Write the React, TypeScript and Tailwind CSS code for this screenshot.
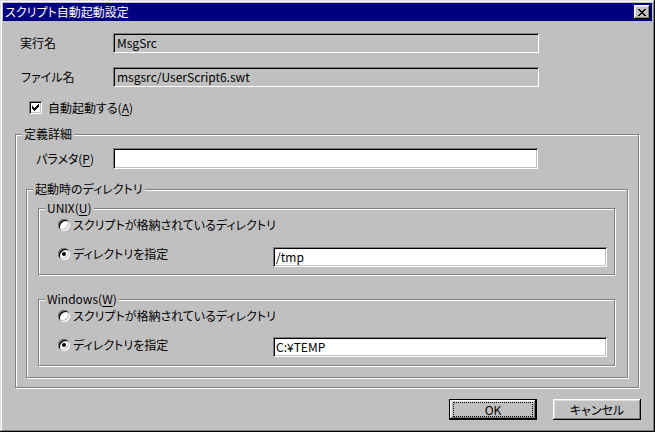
import type { ReactNode } from "react";

const sunken =
  "shadow-[inset_1px_1px_#808080,inset_-1px_-1px_#fff,inset_2px_2px_#000,inset_-2px_-2px_#c0c0c0]";
const raised =
  "shadow-[inset_-1px_-1px_#000,inset_1px_1px_#fff,inset_-2px_-2px_#808080,inset_2px_2px_#dfdfdf]";

function Group({
  title,
  className,
  children,
}: {
  title: ReactNode;
  className: string;
  children?: ReactNode;
}) {
  return (
    <div
      className={`relative shrink-0 border border-[#808080] shadow-[1px_1px_0_#fff,inset_1px_1px_0_#fff] ${className}`}
    >
      <span className="absolute left-[6px] top-[-1px] -translate-y-1/2 bg-[#c0c0c0] px-[2px] leading-[14px] whitespace-nowrap">
        {title}
      </span>
      {children}
    </div>
  );
}

function Radio({ checked }: { checked?: boolean }) {
  return (
    <div
      className={`relative h-[12px] w-[12px] shrink-0 rounded-full bg-white ${sunken}`}
    >
      {checked && (
        <div className="absolute left-[4px] top-[4px] h-[4px] w-[4px] rounded-full bg-black" />
      )}
    </div>
  );
}

function Field({ value, className }: { value: string; className: string }) {
  return (
    <div
      className={`flex shrink-0 items-center whitespace-nowrap leading-[14px] ${sunken} ${className}`}
    >
      {value}
    </div>
  );
}

function U({ children }: { children: string }) {
  return <span className="underline underline-offset-2">{children}</span>;
}

// check mark pixels inside the 13x13 box
const checkPx = [
  [9, 3], [8, 4], [9, 4], [3, 5], [7, 5], [8, 5], [9, 5],
  [3, 6], [4, 6], [6, 6], [7, 6], [8, 6], [3, 7], [4, 7], [5, 7], [6, 7], [7, 7],
  [4, 8], [5, 8], [6, 8], [5, 9],
];

// close button "x" pixels
const closePx = [
  [0, 0], [1, 0], [6, 0], [7, 0],
  [1, 1], [2, 1], [5, 1], [6, 1],
  [2, 2], [3, 2], [4, 2], [5, 2],
  [3, 3], [4, 3],
  [2, 4], [3, 4], [4, 4], [5, 4],
  [1, 5], [2, 5], [5, 5], [6, 5],
  [0, 6], [1, 6], [6, 6], [7, 6],
];

function DirGroup({
  title,
  path,
  rowGap,
  radioOffset,
  top,
}: {
  title: ReactNode;
  path: string;
  rowGap: string;
  radioOffset: string;
  top: string;
}) {
  return (
    <Group title={title} className={`ml-[11px] h-[67px] w-[577px] ${top}`}>
      <div className="flex flex-col">
        <div className="ml-[19px] mt-[10px] flex h-[12px] items-center gap-[3px] leading-[12px]">
          <Radio />
          <span>スクリプトが格納されているディレクトリ</span>
        </div>
        <div className={`ml-[19px] flex items-start ${rowGap}`}>
          <div
            className={`flex h-[12px] w-[215px] shrink-0 items-center gap-[3px] leading-[12px] ${radioOffset}`}
          >
            <Radio checked />
            <span>ディレクトリを指定</span>
          </div>
          <Field value={path} className="h-[20px] w-[334px] bg-white pl-[3px]" />
        </div>
      </div>
    </Group>
  );
}

export default function App() {
  return (
    <div className="h-[432px] w-[655px] bg-[#c0c0c0] p-[3px] text-[12px] text-black font-['Noto_Sans_CJK_JP',sans-serif] [font-feature-settings:'palt'] shadow-[inset_-1px_-1px_#000,inset_1px_1px_#dfdfdf,inset_-2px_-2px_#808080,inset_2px_2px_#fff]">
      <div className="flex h-[18px] items-center justify-between bg-[#000080] pl-[2px] pr-[2px] text-white">
        <span className="leading-[14px]">スクリプト自動起動設定</span>
        <button
          className={`flex h-[14px] w-[16px] items-center justify-center bg-[#c0c0c0] ${raised}`}
        >
          <svg width="8" height="7" viewBox="0 0 8 7" shapeRendering="crispEdges">
            {closePx.map(([x, y]) => (
              <rect key={`${x}-${y}`} x={x} y={y} width="1" height="1" fill="#000" />
            ))}
          </svg>
        </button>
      </div>

      <div className="flex flex-col">
        <div className="mt-[12px] flex h-[20px] items-center">
          <span className="ml-[17px] w-[93px] shrink-0">実行名</span>
          <Field value="MsgSrc" className="h-[20px] w-[426px] pl-[4px]" />
        </div>
        <div className="mt-[14px] flex h-[20px] items-center">
          <span className="ml-[18px] w-[92px] shrink-0">ファイル名</span>
          <Field value="msgsrc/UserScript6.swt" className="h-[20px] w-[426px] pl-[4px]" />
        </div>
        <div className="ml-[26px] mt-[14px] flex h-[13px] items-center gap-[6px] leading-[13px]">
          <div className={`relative h-[13px] w-[13px] shrink-0 bg-white ${sunken}`}>
            <svg
              className="absolute left-0 top-0"
              width="13"
              height="13"
              viewBox="0 0 13 13"
              shapeRendering="crispEdges"
            >
              {checkPx.map(([x, y]) => (
                <rect key={`${x}-${y}`} x={x} y={y} width="1" height="1" fill="#000" />
              ))}
            </svg>
          </div>
          <span>
            自動起動する(<U>A</U>)
          </span>
        </div>

        <Group title="定義詳細" className="ml-[12px] mt-[20px] h-[254px] w-[624px]">
          <div className="flex flex-col">
            <div className="mt-[13px] flex h-[21px] items-center">
              <span className="ml-[20px] w-[77px] shrink-0">
                パラメタ(<U>P</U>)
              </span>
              <Field value="" className="h-[21px] w-[425px] bg-white" />
            </div>
            <Group
              title="起動時のディレクトリ"
              className="ml-[10px] mt-[20px] h-[189px] w-[602px]"
            >
              <div className="flex flex-col">
                <DirGroup
                  title={
                    <>
                      UNIX(<U>U</U>)
                    </>
                  }
                  path="/tmp"
                  top="mt-[18px]"
                  rowGap="mt-[16px]"
                  radioOffset="mt-[1px]"
                />
                <DirGroup
                  title={
                    <>
                      Windows(<U>W</U>)
                    </>
                  }
                  path="C:¥TEMP"
                  top="mt-[24px]"
                  rowGap="mt-[15px]"
                  radioOffset="mt-[2px]"
                />
              </div>
            </Group>
          </div>
        </Group>

        <div className="mt-[11px] flex">
          <button
            className={`relative ml-[446px] h-[21px] w-[88px] border border-black bg-[#c0c0c0] ${raised}`}
          >
            <span className="absolute inset-x-[3px] inset-y-[2px] flex items-center justify-center border border-dotted border-black leading-[12px]">
              OK
            </span>
          </button>
          <button
            className={`ml-[16px] flex h-[21px] w-[88px] items-center justify-center bg-[#c0c0c0] leading-[12px] ${raised}`}
          >
            キャンセル
          </button>
        </div>
      </div>
    </div>
  );
}
